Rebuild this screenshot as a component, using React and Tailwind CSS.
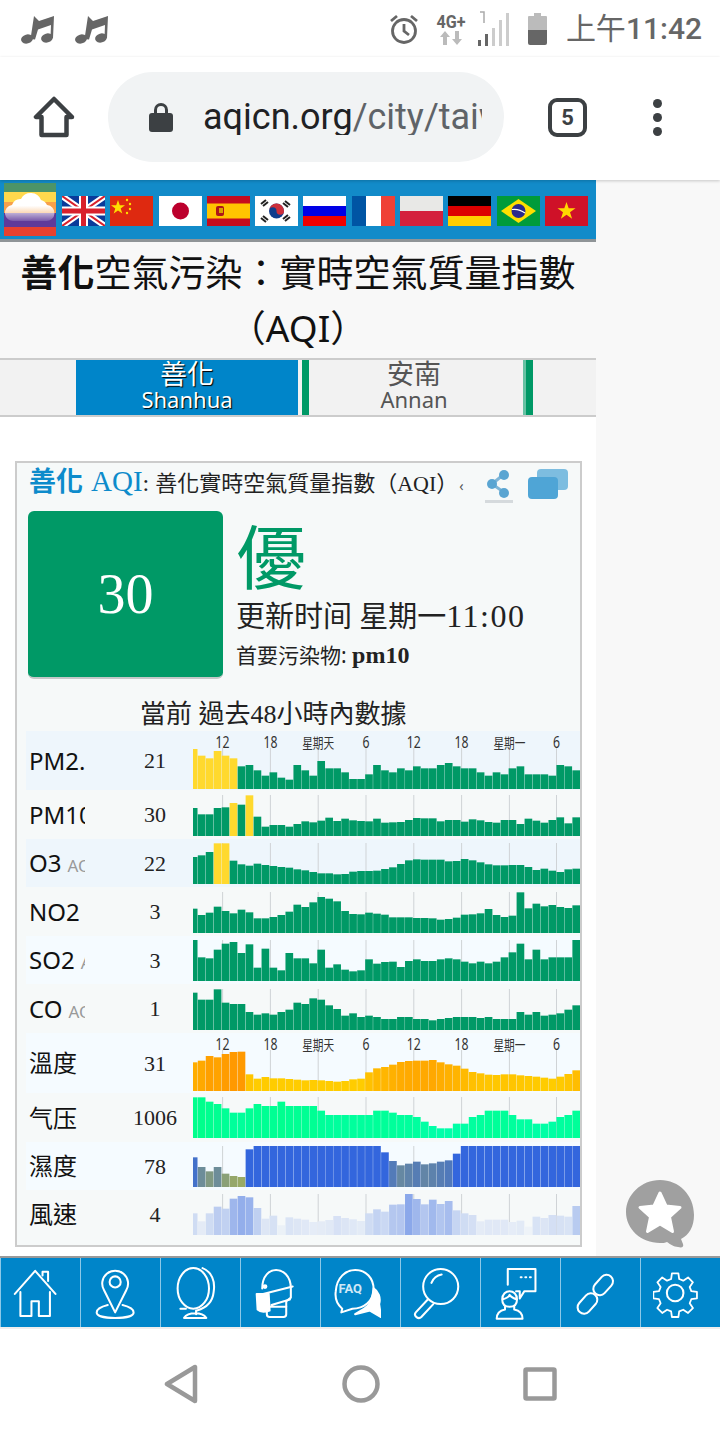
const SERIF = "font-['Liberation_Serif','Noto_Sans_CJK_TC',serif]";

// bar heights are read off a 3x crop, so divide by 3 when drawing
const TICKS = [
  { x: 29.6, label: "12" },
  { x: 77.4, label: "18" },
  { x: 125.2, label: "星期天", cjk: true },
  { x: 173, label: "6" },
  { x: 220.8, label: "12" },
  { x: 268.6, label: "18" },
  { x: 316.4, label: "星期一", cjk: true },
  { x: 363.5, label: "6" },
];

const hex = (c) => [1, 3, 5].map((i) => parseInt(c.slice(i, i + 2), 16));
const mix = (a, b, t) => {
  const k = Math.max(0, Math.min(1, t));
  const [p, q] = [hex(a), hex(b)];
  return `rgb(${p.map((v, i) => Math.round(v + (q[i] - v) * k)).join(",")})`;
};

const GREEN = "#009966";
const YELLOW = "#ffd92e";

const fromTops = (base, tops) => tops.map((t) => base - t);

const ROWS = [
  {
    name: "PM2.5",
    unit: "AQI",
    value: "21",
    h: 59,
    pb: 1,
    labels: true,
    bg: "bg-[#eef6fc]",
    bars: [120, 100, 92, 114, 100, 92, 68, 72, 56, 40, 50, 34, 28, 72, 56, 40, 84, 62, 62, 50, 30, 30, 44, 72, 56, 50, 62, 56, 68, 62, 62, 72, 78, 68, 62, 62, 50, 40, 50, 44, 62, 68, 44, 44, 44, 40, 72, 68, 56],
    color: (h, i) => (i < 6 ? YELLOW : GREEN),
  },
  {
    name: "PM10",
    unit: "AQI",
    value: "30",
    h: 49,
    pb: 3,
    bg: "bg-[#f6f9f9]",
    bars: [84, 65, 65, 84, 86, 99, 94, 122, 58, 28, 33, 33, 28, 36, 44, 41, 46, 55, 45, 52, 47, 45, 44, 52, 40, 41, 42, 48, 54, 53, 53, 44, 48, 48, 43, 50, 47, 42, 40, 48, 48, 36, 52, 46, 40, 48, 56, 38, 56],
    color: (h, i) => (i === 5 || i === 7 ? YELLOW : GREEN),
  },
  {
    name: "O3",
    unit: "AQI",
    value: "22",
    h: 48,
    pb: 3,
    bg: "bg-[#eef6fc]",
    bars: [81, 86, 96, 122, 122, 70, 59, 55, 61, 57, 54, 51, 49, 44, 41, 36, 32, 32, 29, 30, 37, 39, 39, 40, 45, 50, 60, 71, 74, 73, 73, 73, 68, 69, 75, 71, 65, 59, 56, 56, 57, 57, 51, 42, 46, 40, 36, 44, 46],
    color: (h, i) => (i === 3 || i === 4 ? YELLOW : GREEN),
  },
  {
    name: "NO2",
    unit: "AQI",
    value: "3",
    h: 49,
    pb: 3,
    bg: "bg-[#f6f9f9]",
    bars: fromTops(142, [69, 88, 81, 63, 76, 83, 72, 80, 98, 98, 94, 88, 78, 57, 64, 50, 34, 39, 47, 76, 85, 86, 81, 84, 87, 95, 95, 95, 97, 97, 98, 102, 100, 96, 87, 86, 83, 70, 88, 94, 90, 20, 68, 54, 62, 58, 64, 67, 59]),
    color: () => GREEN,
  },
  {
    name: "SO2",
    unit: "AQI",
    value: "3",
    h: 48,
    pb: 3,
    bg: "bg-[#f5fbff]",
    bars: fromTops(288, [165, 217, 220, 194, 176, 171, 204, 178, 248, 191, 248, 256, 204, 220, 220, 235, 194, 248, 238, 254, 259, 256, 223, 236, 231, 230, 246, 228, 223, 228, 228, 223, 220, 223, 230, 235, 230, 235, 230, 217, 202, 176, 223, 194, 223, 217, 217, 217, 165]),
    color: () => GREEN,
  },
  {
    name: "CO",
    unit: "AQI",
    value: "1",
    h: 49,
    pb: 3,
    bg: "bg-[#f6f9f9]",
    bars: fromTops(434, [322, 343, 343, 312, 352, 356, 356, 380, 388, 384, 388, 380, 373, 352, 356, 339, 343, 360, 371, 391, 384, 395, 391, 395, 401, 401, 395, 395, 401, 401, 405, 401, 398, 395, 395, 395, 398, 395, 401, 401, 401, 380, 388, 380, 391, 388, 384, 373, 360]),
    color: () => GREEN,
  },
  {
    name: "溫度",
    value: "31",
    h: 60,
    pb: 2,
    labels: true,
    bg: "bg-[#f5fbff]",
    bars: fromTops(618, [532, 527, 513, 517, 507, 501, 500, 568, 581, 576, 580, 580, 582, 584, 586, 585, 586, 588, 590, 588, 583, 581, 562, 550, 546, 539, 531, 528, 527, 527, 525, 532, 538, 542, 551, 561, 565, 569, 570, 568, 568, 571, 573, 575, 578, 581, 575, 567, 556]),
    color: (h) => mix("#ffcc00", "#ff9900", (h - 40) / 75),
  },
  {
    name: "气压",
    value: "1006",
    h: 49,
    pb: 4,
    bg: "bg-[#f6f9f9]",
    bars: fromTops(173, [51, 51, 64, 71, 84, 97, 97, 84, 71, 77, 77, 64, 77, 77, 77, 77, 91, 104, 104, 104, 104, 104, 104, 91, 91, 97, 104, 104, 110, 124, 137, 144, 144, 130, 130, 110, 104, 91, 91, 91, 104, 117, 117, 130, 130, 124, 110, 104, 91]),
    color: (h) => mix("#00ffaa", "#00ff8c", (h - 30) / 90),
  },
  {
    name: "濕度",
    value: "78",
    h: 48,
    pb: 3,
    bg: "bg-[#f5fbff]",
    bars: fromTops(319, [230, 259, 272, 259, 279, 286, 289, 206, 196, 196, 196, 196, 196, 196, 196, 196, 196, 196, 196, 196, 196, 196, 196, 196, 215, 241, 254, 249, 243, 251, 248, 243, 239, 219, 196, 196, 196, 196, 196, 196, 196, 196, 196, 196, 196, 196, 196, 196, 196]),
    color: (h) => mix("#99aa66", "#3366dd", (h - 30) / 70),
  },
  {
    name: "風速",
    value: "4",
    h: 48,
    pb: 3,
    bg: "bg-[#f6f9f9]",
    bars: fromTops(465, [400, 424, 400, 380, 386, 356, 348, 352, 384, 416, 407, 436, 412, 416, 419, 426, 424, 420, 408, 414, 418, 423, 400, 388, 395, 374, 373, 342, 357, 373, 359, 372, 363, 391, 400, 405, 424, 419, 419, 419, 426, 422, 440, 410, 414, 405, 407, 410, 378]),
    color: (h) => mix("#f6f9f9", "#3366dd", 0.55 * Math.pow(h / 123, 1.6)),
  },
];

// the first bar is cut to about half a slot, the rest are 8px
const barX = (i) => (i === 0 ? 0 : 4.8 + (i - 1) * 7.97);
const barW = (i) => (i === 0 ? 4.8 : 7.97);

function Chart({ row }) {
  const W = 387;
  const plot = 41;
  const top = row.h - row.pb - plot;
  const base = row.h - row.pb;
  return (
    <svg width={W} height={row.h} className="block shrink-0">
      {TICKS.map((t, i) => (
        <line key={i} x1={t.x} x2={t.x} y1={top} y2={base} stroke="#cfd3d6" strokeWidth="1" />
      ))}
      {row.bars.map((b, i) => {
        const h = Math.max(b / 3, 1);
        return <rect key={i} x={barX(i)} y={base - h} width={barW(i) - 0.3} height={h} fill={row.color(b, i)} />;
      })}
      {row.labels &&
        TICKS.map((t, i) => (
          <text
            key={i}
            x={t.x}
            y={17}
            textAnchor="middle"
            fontSize={t.cjk ? 14 : 16}
            fill="#333"
            fontFamily="'Noto Sans','Noto Sans CJK TC',sans-serif"
            textLength={t.cjk ? 32 : t.label.length * 7}
            lengthAdjust="spacingAndGlyphs"
          >
            {t.label}
          </text>
        ))}
    </svg>
  );
}

function DataRow({ row }) {
  return (
    <div className={`flex items-center ${row.bg}`} style={{ height: row.h }}>
      <div className="w-[59px] pl-[3px] overflow-hidden whitespace-nowrap text-[24px] leading-none text-[#111]">
        {row.name}
        {row.unit && <span className="ml-[6px] text-[17px] text-[#999]">{row.unit}</span>}
      </div>
      <div className={`w-[108px] pl-[32px] text-center text-[22px] text-[#222] ${SERIF}`}>{row.value}</div>
      <Chart row={row} />
    </div>
  );
}

function Flag({ children }) {
  return (
    <svg width="43" height="30" viewBox="0 0 43 30" className="shrink-0">
      {children}
    </svg>
  );
}

function Flags() {
  return (
    <div className="flex items-center gap-[5.3px] ml-[6px] mt-[3px]">
      <Flag>
        <rect width="43" height="30" fill="#0a3a9a" />
        <path d="M0 0 43 30M43 0 0 30" stroke="#fff" strokeWidth="6" />
        <path d="M0 0 43 30M43 0 0 30" stroke="#d8202c" strokeWidth="2" />
        <path d="M21.5 0V30M0 15H43" stroke="#fff" strokeWidth="9" />
        <path d="M21.5 0V30M0 15H43" stroke="#d8202c" strokeWidth="5" />
      </Flag>
      <Flag>
        <rect width="43" height="30" fill="#de2910" />
        <path d="M8 4l1.8 5.2H15l-4.3 3.2 1.6 5.2L8 14.400l-4.300 3.200 1.600-5.200L1 9.200h5.200z" fill="#ffde00" />
        <circle cx="17" cy="4" r="1.200" fill="#ffde00" />
        <circle cx="20" cy="8" r="1.200" fill="#ffde00" />
        <circle cx="20" cy="13" r="1.200" fill="#ffde00" />
        <circle cx="17" cy="17" r="1.200" fill="#ffde00" />
      </Flag>
      <Flag>
        <rect width="43" height="30" fill="#fff" />
        <circle cx="21.500" cy="15" r="8.500" fill="#bc002d" />
      </Flag>
      <Flag>
        <rect width="43" height="30" fill="#c60b1e" />
        <rect y="7.500" width="43" height="15" fill="#ffc400" />
        <rect x="9" y="10" width="8" height="10" rx="2" fill="#ad1519" />
        <rect x="12" y="12" width="4" height="5" fill="#d9a300" />
      </Flag>
      <Flag>
        <rect width="43" height="30" fill="#fff" />
        <circle cx="21.500" cy="15" r="7.500" fill="#0f3c8c" />
        <path d="M14 15a3.750 3.750 0 0 1 7.500 0 3.750 3.750 0 0 0 7.500 0 7.500 7.500 0 0 0-15 0z" fill="#cd2e3a" />
        <path d="M6 8l5-4M8 10l5-4M30 5l5 4M28 7l5 4M6 22l5 4M8 20l5 4M30 25l5-4M28 23l5-4" stroke="#222" strokeWidth="2" />
      </Flag>
      <Flag>
        <rect width="43" height="10" fill="#fff" />
        <rect y="10" width="43" height="10" fill="#0000e6" />
        <rect y="20" width="43" height="10" fill="#f00000" />
      </Flag>
      <Flag>
        <rect width="14" height="30" fill="#0055a4" />
        <rect x="14" width="15" height="30" fill="#fff" />
        <rect x="29" width="14" height="30" fill="#ef4135" />
      </Flag>
      <Flag>
        <rect width="43" height="15" fill="#e8e8e6" />
        <rect y="15" width="43" height="15" fill="#d4213d" />
      </Flag>
      <Flag>
        <rect width="43" height="10" fill="#000" />
        <rect y="10" width="43" height="10" fill="#dd0000" />
        <rect y="20" width="43" height="10" fill="#ffce00" />
      </Flag>
      <Flag>
        <rect width="43" height="30" fill="#009b3a" />
        <path d="M21.500 3 39 15 21.500 27 4 15z" fill="#fedf00" />
        <circle cx="21.500" cy="15" r="7" fill="#2a2a8c" />
        <path d="M15 13.500q7-1 13 3.500" stroke="#fff" strokeWidth="1.200" fill="none" />
      </Flag>
      <Flag>
        <rect width="43" height="30" fill="#cf1128" />
        <path d="M21.500 6l2.200 6.300h6.800l-5.500 4 2.100 6.500-5.600-4-5.600 4 2.100-6.500-5.500-4h6.800z" fill="#ffd800" />
      </Flag>
    </div>
  );
}

function Logo() {
  return (
    <svg width="52" height="53" viewBox="0 0 52 53" className="shrink-0">
      <defs>
        <linearGradient id="cloudFade" x1="0" x2="0" y1="0" y2="1">
          <stop offset="0.45" stopColor="#fff" />
          <stop offset="1" stopColor="#fff" stopOpacity="0.15" />
        </linearGradient>
      </defs>
      <rect width="52" height="9" fill="#4c9468" />
      <rect y="9" width="52" height="10" fill="#ffd84d" />
      <rect y="19" width="52" height="11" fill="#f7a04a" />
      <rect y="30" width="52" height="14" fill="#5f3a9a" />
      <rect y="44" width="52" height="9" fill="#e8412f" />
      <path d="M10 38a8 8 0 0 1-2-16 9 9 0 0 1 9-6 11 11 0 0 1 20 1 9 9 0 0 1 6 5 8 8 0 0 1-1 16z" fill="url(#cloudFade)" />
    </svg>
  );
}

function NoteIcon() {
  return (
    <svg width="38" height="30" viewBox="0 0 38 30" fill="#666">
      <ellipse cx="7" cy="25" rx="6" ry="4.500" transform="rotate(-15 7 25)" />
      <ellipse cx="27" cy="24" rx="6" ry="4.500" transform="rotate(-15 27 24)" />
      <path d="M10.500 25 14 2l5 5 15-5-1 22h-2.500l.5-13-13 4.500-3 10z" />
    </svg>
  );
}

function StatusBar() {
  return (
    <div className="h-[57px] bg-white flex items-center relative">
      <div className="flex items-center gap-[16px] ml-[20px]">
        <NoteIcon />
        <NoteIcon />
      </div>
      <svg width="32" height="32" viewBox="0 0 32 32" fill="none" stroke="#666" strokeWidth="2.800" className="ml-auto mr-[13px]">
        <circle cx="16" cy="18" r="11.500" />
        <path d="M16 11v7l5 4M3 8l6-5M29 8l-6-5" />
      </svg>
      <div className="w-[36px] mr-[8px] flex flex-col items-center">
        <span className="text-[19px] leading-[18px] font-bold text-[#666] font-['Roboto',sans-serif] scale-x-[.85]">4G+</span>
        <svg width="24" height="14" viewBox="0 0 24 14" fill="#bbb">
          <path d="M6 0l5 6H8v8H4V6H1zM18 14l5-6h-3V0h-4v8h-3z" />
        </svg>
      </div>
      <svg width="34" height="36" viewBox="0 0 34 36" className="mr-[17px]">
        <path d="M3 1h4v11M8 1v0" stroke="#aaa" strokeWidth="1.500" fill="none" />
        <rect x="1" y="29" width="3" height="6" fill="#666" />
        <rect x="8" y="23" width="3" height="12" fill="#666" />
        <rect x="15" y="17" width="3" height="18" fill="#ccc" />
        <rect x="22" y="9" width="3" height="26" fill="#ccc" />
        <rect x="29" y="2" width="3" height="33" fill="#ccc" />
      </svg>
      <div className="w-[19px] h-[32px] mr-[19px] relative">
        <div className="absolute left-[6px] top-0 w-[7px] h-[3px] bg-[#bbb]" />
        <div className="absolute left-0 top-[3px] w-[19px] h-[14px] bg-[#bbb] rounded-t-[1px]" />
        <div className="absolute left-0 top-[17px] w-[19px] h-[15px] bg-[#666] rounded-b-[2px]" />
      </div>
      <div className="mr-[18px] text-[30px] leading-none text-[#666] font-['Roboto','Noto_Sans_CJK_TC',sans-serif] font-medium whitespace-nowrap">
        <span className="font-normal">上午</span>11:42
      </div>
    </div>
  );
}

function BrowserBar() {
  return (
    <div className="h-[123px] pb-[3px] bg-white flex items-center font-['Roboto',sans-serif] relative z-10 shadow-[0_1px_3px_rgba(0,0,0,0.2)]">
      <svg width="42" height="42" viewBox="0 0 42 42" fill="none" stroke="#3c4043" strokeWidth="4.500" strokeLinejoin="round" className="ml-[33px]">
        <path d="M21 3 3 21h5.500v18h25V21H39z" />
      </svg>
      <div className="ml-[33px] w-[396px] h-[90px] rounded-full bg-[#f1f3f4] flex items-center">
        <svg width="26" height="32" viewBox="0 0 26 32" fill="#3c4043" className="ml-[40px] shrink-0">
          <path d="M6 13V9a7 7 0 0 1 14 0v4h-3V9a4 4 0 0 0-8 0v4z" />
          <rect x="1" y="12" width="24" height="19" rx="3" />
        </svg>
        <div className="ml-[29px] w-[279px] overflow-hidden whitespace-nowrap text-[36px] leading-none text-[#5f6368]">
          <span className="text-[#202124]">aqicn.org</span>/city/taiwan
        </div>
      </div>
      <div className="ml-[44px] w-[39px] h-[39px] rounded-[9px] border-[4px] border-[#3c4043] flex items-center justify-center text-[22px] font-bold text-[#3c4043]">
        5
      </div>
      <div className="ml-[66px] flex flex-col gap-[5px]">
        <div className="w-[9px] h-[9px] rounded-full bg-[#3c4043]" />
        <div className="w-[9px] h-[9px] rounded-full bg-[#3c4043]" />
        <div className="w-[9px] h-[9px] rounded-full bg-[#3c4043]" />
      </div>
    </div>
  );
}

function Tabs() {
  return (
    <div className="h-[59px] bg-[#f2f2f2] border-y-2 border-[#cccccc] flex pl-[76px]">
      <div className="w-[222px] bg-[#0085c9] flex flex-col items-center text-white [text-shadow:1px_1px_1px_#000]">
        <span className="text-[27px] leading-[27px]">善化</span>
        <span className="text-[22px] leading-[24px]">Shanhua</span>
      </div>
      <div className="w-[7px] ml-[4px] bg-[#009966]" />
      <div className="w-[214px] pr-[4px] flex flex-col items-center text-[#555]">
        <span className="text-[27px] leading-[27px]">安南</span>
        <span className="text-[22px] leading-[24px]">Annan</span>
      </div>
      <div className="w-[3px] bg-[#66c2a3]" />
      <div className="w-[7px] bg-[#009966]" />
    </div>
  );
}

function ShareIcon() {
  return (
    <svg width="30" height="34" viewBox="0 0 30 34">
      <path d="M19 6 8 15l13 9" stroke="#7fb6d8" strokeWidth="3" fill="none" />
      <circle cx="20" cy="6" r="5" fill="#5aa5d2" />
      <circle cx="8" cy="15" r="5" fill="#5aa5d2" />
      <circle cx="20" cy="24" r="5" fill="#5aa5d2" />
      <rect x="1" y="31" width="28" height="3" fill="#d5dadd" />
    </svg>
  );
}

function WindowsIcon() {
  return (
    <svg width="40" height="30" viewBox="0 0 40 30">
      <rect x="9" y="0" width="31" height="21" rx="4" fill="#7dbde0" />
      <rect x="0" y="8" width="30" height="22" rx="4" fill="#4fa5d6" />
    </svg>
  );
}

function Card() {
  return (
    <div className="w-[567px] h-[786px] ml-[15px] mt-[44px] border-2 border-[#cccccc] bg-[#f6f9f9]">
      <div className="h-[42px] flex items-center pl-[12px]">
        <div className="w-[449px] overflow-hidden whitespace-nowrap flex items-baseline -mt-[6px]">
          <span className="text-[27px] font-bold text-[#0d8bcb] leading-none">善化</span>
          <span className={`ml-[8px] text-[29px] text-[#0d8bcb] leading-none ${SERIF}`}>AQI</span>
          <span className={`text-[24px] leading-none text-[#222] ${SERIF}`}>:&nbsp;</span>
          <span className={`text-[22px] leading-none text-[#222] ${SERIF}`}>善化實時空氣質量指數（AQI）</span>
          <span className="ml-[1px] text-[14px] leading-none text-[#555]">‹</span>
        </div>
        <div className="ml-[6px] mt-[3px]">
          <ShareIcon />
        </div>
        <div className="ml-[14px]">
          <WindowsIcon />
        </div>
      </div>
      <div className="flex pl-[11px] pt-[6px]">
        <div className={`w-[195px] h-[168px] rounded-[6px] bg-[#009966] border-b-2 border-[#c4c8c8] flex items-center justify-center text-[56px] text-white ${SERIF}`}>
          30
        </div>
        <div className="ml-[13px] flex flex-col">
          <div className="text-[70px] leading-[90px] mt-[1px] text-[#009966]">優</div>
          <div className={`text-[29px] leading-[36px] -mt-[4px] text-[#222] whitespace-nowrap ${SERIF}`}>
            更新时间 星期一<span className="text-[32px] tracking-[1.5px]">11:00</span>
          </div>
          <div className="text-[21px] leading-[30px] mt-[5px] text-[#222] whitespace-nowrap">
            首要污染物: <b className={`text-[24px] ${SERIF}`}>pm10</b>
          </div>
        </div>
      </div>
      <div className={`pl-[123px] mt-[19px] h-[33px] text-[26px] leading-[34px] text-[#222] whitespace-nowrap ${SERIF}`}>
        當前 過去48小時內數據
      </div>
      <div className="ml-[9px]">
        {ROWS.map((r) => (
          <DataRow key={r.name} row={r} />
        ))}
      </div>
    </div>
  );
}

const NAV_ICONS = [
  // home
  <g key="home">
    <path d="M2 34 24 9l22 25" />
    <path d="M8 32v26h12V42h8v16h12V32M32 14V10h6v10" />
  </g>,
  // pin
  <g key="pin">
    <path d="M24 54 12 30a14 14 0 1 1 24 0z" />
    <circle cx="24" cy="21" r="6" />
    <path d="M16 46C8 48 4 51 4 54c0 4 9 6 20 6s20-2 20-6c0-3-4-6-12-8" />
  </g>,
  // globe
  <g key="globe">
    <ellipse cx="22" cy="28" rx="17" ry="22" />
    <path d="M32 6c10 4 14 14 12 26-1 10-8 17-18 20M25 52v4M12 60c2-3 7-5 12-5s10 2 12 5zM8 50h6" />
  </g>,
  // mask head
  <g key="mask">
    <path d="M10 28c0-14 8-20 15-20s16 6 16 20v10l-5 4v14c0 2-1 3-3 3H18c-2 0-3-1-3-3v-6" />
    <path d="M11 34l32-8M20 46l20-6M18 48h18" />
    <path d="M4 34h13l1 18c-6 2-11 1-13-1z" fill="#fff" />
    <circle cx="13" cy="26" r="1.500" fill="#fff" />
  </g>,
  // faq bubbles
  <g key="faq">
    <path d="M10 50c-6-5-8-12-7-19C4 16 14 8 24 8c12 0 20 9 20 21 0 13-11 21-23 21l-12 4z" />
    <text x="6" y="33" fontSize="14" fill="#cfe8f6" stroke="none" fontWeight="700" fontFamily="'Roboto',sans-serif">FAQ</text>
    <path d="M44 28c5 3 8 10 6 17l2 14-12-7-16 4 10-6c5-3 9-10 10-22z" fill="#fff" />
  </g>,
  // magnifier
  <g key="search">
    <circle cx="30" cy="26" r="19" />
    <path d="M16 40 3 54c-3 4 3 8 6 5l13-14M20 22c2-5 5-8 11-9" />
  </g>,
  // person with speech bubble
  <g key="person">
    <path d="M16 24V7h30v24H34l-5 8v-8h-4" />
    <path d="M10 40c0-6 4-9 8-9s8 3 8 9c0 5-3 8-8 8s-8-3-8-8zM10 40c4-1 7-2 8-5 2 3 5 4 8 5" />
    <path d="M13 48v3c-5 1-9 3-9 10h28c0-7-4-9-9-10v-3" />
    <path d="M30 16h1M35 16h1M40 16h1" />
  </g>,
  // chain link
  <g key="link">
    <rect x="-7" y="-12" width="14" height="25" rx="7" transform="translate(16,44) rotate(42)" />
    <rect x="-7" y="-12" width="14" height="25" rx="7" transform="translate(33,24) rotate(42)" />
  </g>,
  // gear
  <g key="gear">
    <circle cx="24" cy="33" r="9" />
    <path d="M20 10h8l1 7 5 2 6-4 6 6-4 6 2 5 7 1v8l-7 1-2 5 4 6-6 6-6-4-5 2-1 7h-8l-1-7-5-2-6 4-6-6 4-6-2-5-7-1v-8l7-1 2-5-4-6 6-6 6 4 5-2z" transform="translate(3,3) scale(.875)" />
  </g>,
];

function BottomNav() {
  return (
    <div className="h-[73px] shrink-0 border-t-[2px] border-[#999] grid grid-cols-9 bg-[#0085c9] border-b-[2px] border-b-[#eee]">
      {NAV_ICONS.map((icon, i) => (
        <div key={i} className="flex items-center justify-center pr-[8px] border-l border-[#8cc8e8]">
          <svg width="48" height="64" viewBox="0 0 52 66" fill="none" stroke="#fff" strokeWidth="2.200" strokeLinejoin="round" strokeLinecap="round">
            {icon}
          </svg>
        </div>
      ))}
    </div>
  );
}

function AndroidNav() {
  return (
    <div className="flex-1 bg-white flex items-center justify-center gap-[143px] pb-[1px]">
      <svg width="36" height="40" viewBox="0 0 36 40" fill="none" stroke="#999" strokeWidth="4.500" strokeLinejoin="round">
        <path d="M32 3v34L4 20z" />
      </svg>
      <svg width="38" height="38" viewBox="0 0 38 38" fill="none" stroke="#999" strokeWidth="4.500">
        <circle cx="19" cy="19" r="16.500" />
      </svg>
      <svg width="34" height="34" viewBox="0 0 34 34" fill="none" stroke="#999" strokeWidth="4.500" strokeLinejoin="round">
        <rect x="2.500" y="2.500" width="29" height="29" rx="1" />
      </svg>
    </div>
  );
}

function FloatButton() {
  return (
    <svg width="70" height="70" viewBox="0 0 70 70" className="absolute left-[626px] top-[999px]">
      <path d="M34 1c19 0 34 15 34 35 0 12-5 20-13 24l2 5c1 3-1 4-5 3-4 0-8-3-11-5-2 1-4 1-7 1C15 64 0 50 0 33S15 1 34 1z" fill="#a0a0a0" />
      <path d="M34 14l6 13 14 1.500-10.500 9.500 3 14.500L34 45l-12.500 7.500 3-14.500L14 28.500 28 27z" fill="#fff" stroke="#fff" strokeWidth="3" strokeLinejoin="round" />
    </svg>
  );
}

export default function App() {
  return (
    <div className="w-[720px] h-[1440px] flex flex-col overflow-hidden bg-white text-black font-['Noto_Sans','Noto_Sans_CJK_TC',sans-serif]">
      <StatusBar />
      <BrowserBar />
      <div className="h-[1076px] shrink-0 relative bg-[#f8f8f8] overflow-hidden">
        <div className="w-[596px] h-full bg-white">
          <div className="h-[62px] bg-[#128bc9] border-b-[3px] border-[#8f9497] flex items-center pl-[4px]">
            <Logo />
            <Flags />
          </div>
          <div className="h-[116px] bg-[#f8f8f8] text-center text-[37px] leading-[55px] pt-[3px] text-[#111]">
            <b>善化</b>空氣污染：實時空氣質量指數
            <br />
            （AQI）
          </div>
          <Tabs />
          <Card />
        </div>
        <FloatButton />
      </div>
      <BottomNav />
      <AndroidNav />
    </div>
  );
}
